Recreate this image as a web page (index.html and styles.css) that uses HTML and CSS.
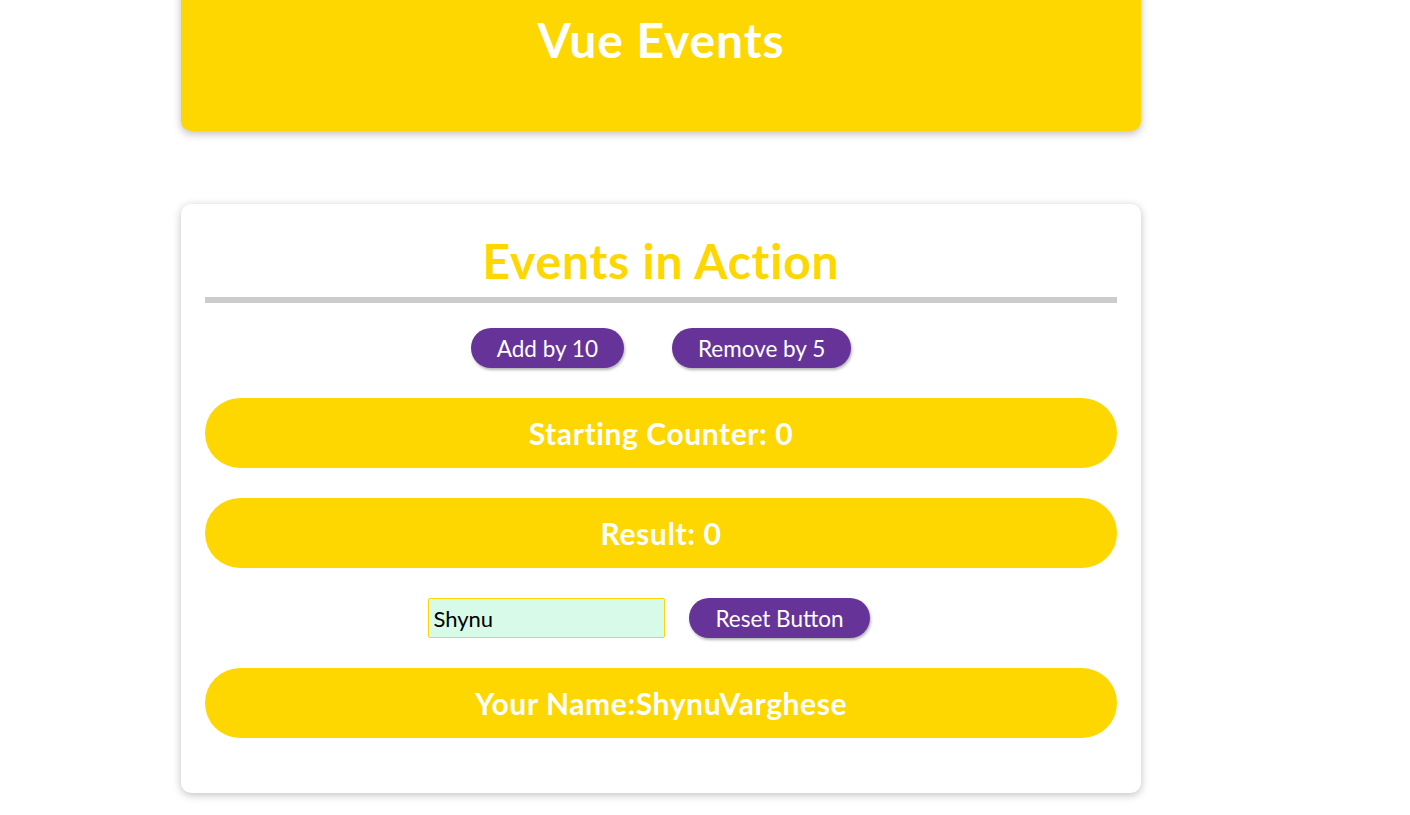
FILE: index.html
```html
<!DOCTYPE html>
<html lang="en">
<head>
<meta charset="utf-8">
<title>Vue Events</title>
<link rel="stylesheet" href="styles.css">
</head>
<body>
<div class="page">
  <header class="hero">
    <h1 class="hero-title">Vue Events</h1>
  </header>
  <section class="card">
    <h2 class="card-title">Events in Action</h2>
    <div class="divider"></div>
    <div class="row row-buttons">
      <button class="btn">Add by 10</button>
      <button class="btn">Remove by 5</button>
    </div>
    <div class="pill">Starting Counter: 0</div>
    <div class="pill">Result: 0</div>
    <div class="row row-input">
      <input class="name-input" type="text" value="Shynu">
      <button class="btn">Reset Button</button>
    </div>
    <div class="pill">Your Name:ShynuVarghese</div>
  </section>
</div>
</body>
</html>
```
FILE: styles.css
```css
html, body {
  margin: 0;
  padding: 0;
  background: #ffffff;
}
body {
  font-family: "Lato", "Open Sans", sans-serif;
}
.page {
  width: 960px;
  margin-left: 181px;
  padding-bottom: 40px;
}
.hero {
  background: #ffd700;
  border-radius: 10px;
  margin-top: -40px;
  padding-top: 51px;
  height: 120px;
  box-shadow: 0 3px 8px rgba(0, 0, 0, 0.25);
}
.hero-title {
  margin: 0;
  text-align: center;
  color: #ffffff;
  font-size: 48px;
  line-height: 58px;
  font-weight: 700;
  letter-spacing: 0.9px;
}
.card {
  margin-top: 73px;
  background: #ffffff;
  border-radius: 10px;
  box-shadow: 0 2px 8px rgba(0, 0, 0, 0.25);
  padding: 28px 24px 55px;
  display: flex;
  flex-direction: column;
}
.card-title {
  margin: 0;
  text-align: center;
  color: #ffd700;
  font-size: 48px;
  line-height: 58px;
  font-weight: 700;
  letter-spacing: 0.8px;
}
.divider {
  height: 6px;
  background: #cccccc;
  margin-top: 7px;
}
.row {
  display: flex;
  justify-content: center;
  align-items: center;
}
.row-buttons {
  margin-top: 25px;
}
.row-input {
  margin-top: 30px;
}
.btn {
  height: 40px;
  margin: 0 24px;
  padding: 0 26px;
  border: none;
  border-radius: 20px;
  background: #663399;
  color: #ffffff;
  font-family: inherit;
  font-size: 22.5px;
  box-shadow: 1px 2px 3px rgba(0, 0, 0, 0.3);
}
.pill {
  margin-top: 30px;
  height: 70px;
  border-radius: 35px;
  background: #ffd700;
  color: #ffffff;
  font-size: 30px;
  font-weight: 700;
  letter-spacing: 0.6px;
  display: flex;
  align-items: center;
  justify-content: center;
}
.name-input {
  box-sizing: border-box;
  width: 237px;
  height: 40px;
  margin: 0;
  padding: 0 4px;
  border: 1px solid #ffd700;
  border-radius: 2px;
  background: #d7fbe8;
  color: #000000;
  font-family: inherit;
  font-size: 22px;
  outline: none;
}
```
